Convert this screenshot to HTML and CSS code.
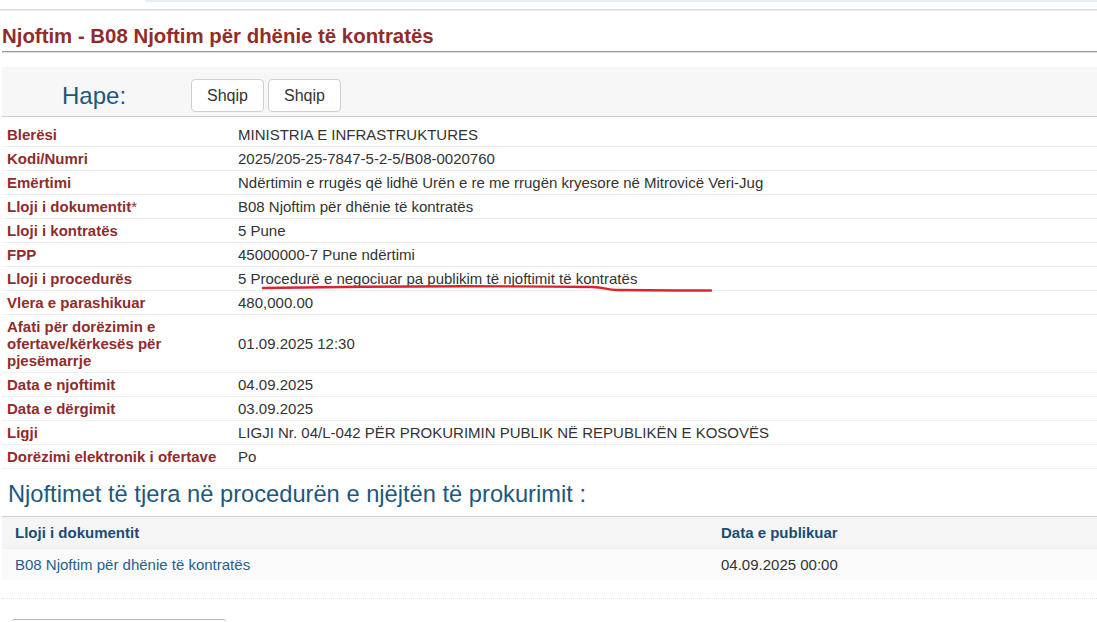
FILE: index.html
```html
<!DOCTYPE html>
<html>

<head>
    <meta charset="UTF-8">
    <title>Njoftim - B08 Njoftim për dhënie të kontratës</title>
    <link rel="stylesheet" href="styles.css">
</head>
<body>
<div class="top-strip"></div>
<div class="top-rule"></div>

<div class="page">
    <h1 class="notice-title">Njoftim - B08 Njoftim për dhënie të kontratës</h1>

    <div class="open-panel">
        <div class="open-label">Hape:</div>
        <button class="lang-btn">Shqip</button>
        <button class="lang-btn">Shqip</button>
    </div>

    <table class="details">
        <tr><td class="label">Blerësi</td><td class="value">MINISTRIA E INFRASTRUKTURES</td></tr>
        <tr><td class="label">Kodi/Numri</td><td class="value">2025/205-25-7847-5-2-5/B08-0020760</td></tr>
        <tr><td class="label">Emërtimi</td><td class="value">Ndërtimin e rrugës që lidhë Urën e re me rrugën kryesore në Mitrovicë Veri-Jug</td></tr>
        <tr><td class="label">Lloji i dokumentit<span class="req">*</span></td><td class="value">B08 Njoftim për dhënie të kontratës</td></tr>
        <tr><td class="label">Lloji i kontratës</td><td class="value">5 Pune</td></tr>
        <tr><td class="label">FPP</td><td class="value">45000000-7 Pune ndërtimi</td></tr>
        <tr><td class="label">Lloji i procedurës</td><td class="value">5 Procedurë e negociuar pa publikim të njoftimit të kontratës</td></tr>
        <tr><td class="label">Vlera e parashikuar</td><td class="value">480,000.00</td></tr>
        <tr><td class="label">Afati për dorëzimin e ofertave/kërkesës për pjesëmarrje</td><td class="value">01.09.2025 12:30</td></tr>
        <tr><td class="label">Data e njoftimit</td><td class="value">04.09.2025</td></tr>
        <tr><td class="label">Data e dërgimit</td><td class="value">03.09.2025</td></tr>
        <tr><td class="label">Ligji</td><td class="value">LIGJI Nr. 04/L-042 PËR PROKURIMIN PUBLIK NË REPUBLIKËN E KOSOVËS</td></tr>
        <tr><td class="label">Dorëzimi elektronik i ofertave</td><td class="value">Po</td></tr>
    </table>

    <h2 class="other-title">Njoftimet të tjera në procedurën e njëjtën të prokurimit :</h2>

    <table class="others">
        <tr class="head"><th class="col-doc">Lloji i dokumentit</th><th>Data e publikuar</th></tr>
        <tr class="row"><td><a href="#">B08 Njoftim për dhënie të kontratës</a></td><td>04.09.2025 00:00</td></tr>
        <tr class="blank"><td></td><td></td></tr>
    </table>

    <div class="bottom-box"></div>
</div>

<!-- red pen mark under the procedure type -->
<svg class="pen-mark" width="460" height="14" viewBox="0 0 460 14">
    <path d="M5 7 C 120 5, 250 5, 335 6 C 345 6, 350 9, 358 9 C 400 9.5, 420 9.5, 453 9.5" fill="none" stroke="#d7262f" stroke-width="2.4" stroke-linecap="round"/>
</svg>
</body>
</html>
```

FILE: styles.css
```css
body {
    margin: 0;
    font-family: "Liberation Sans", Arial, sans-serif;
    color: #333;
    background: #fff;
    position: relative;
}

.top-strip {
    height: 2px;
    margin-left: 145px;
    background: #e8edf2;
    border-bottom-left-radius: 3px;
}
.top-rule {
    margin-top: 7px;
    border-top: 1px solid #d9d9d9;
    border-bottom: 1px solid #ececec;
}

.page {
    padding-left: 2px;
}

.notice-title {
    margin: 13px 0 0;
    padding: 0 0 3px 0;
    font-size: 20.4px;
    line-height: 24px;
    font-weight: bold;
    color: #8f2c2c;
    border-bottom: 1px solid #999;
    box-shadow: 0 1px 0 #dedede;
}

.open-panel {
    display: flex;
    margin-top: 15px;
    padding: 12px 0 4px;
    background: #f7f7f7;
    border-bottom: 1px solid #cdcdcd;
}
.open-label {
    width: 129px;
    padding-left: 60px;
    font-size: 24px;
    line-height: 33px;
    color: #1f5680;
}
.lang-btn {
    height: 33px;
    width: 73px;
    margin-right: 4px;
    padding: 0;
    font-family: "Liberation Sans", Arial, sans-serif;
    font-size: 16px;
    color: #333;
    background: #fff;
    border: 1px solid #cfcfcf;
    border-radius: 4px;
}

.details {
    width: 100%;
    margin-top: 6px;
    border-collapse: collapse;
    font-size: 15px;
    line-height: 17px;
}
.details td {
    padding: 3px 5px;
    border-bottom: 1px solid #f0f0f0;
    vertical-align: middle;
}
.details .label {
    width: 221px;
    font-weight: bold;
    color: #8f2c2c;
}
.details .req {
    font-weight: normal;
}
.details .value {
    color: #333;
}

.other-title {
    margin: 12px 0 0;
    padding: 0 0 9px 6px;
    font-size: 23.7px;
    line-height: 26px;
    font-weight: normal;
    color: #1d5880;
    border-bottom: 1px solid #cfcfcf;
}

.others {
    width: 100%;
    border-collapse: collapse;
    font-size: 15px;
    line-height: 17px;
}
.others th {
    text-align: left;
    font-weight: bold;
    color: #1b4d73;
}
.others th, .others td {
    padding: 7px 13px;
}
.others .col-doc {
    width: 675px;
    padding-right: 18px;
}
.others .head {
    background: #f5f5f5;
    border-bottom: 1px solid #f0f0f0;
}
.others .row {
    background: #fafafa;
}
.others .row td {
    padding: 7px 13px;
    height: 17px;
}
.others a {
    color: #26608c;
    text-decoration: none;
}
.others .blank td {
    height: 18px;
    padding: 0;
    border-bottom: 1px dotted #e6e6e6;
}

.bottom-box {
    width: 214px;
    height: 20px;
    margin: 20px 0 0 10px;
    border-top: 1px solid #b5b5b5;
    border-radius: 3px;
}

.pen-mark {
    position: absolute;
    left: 258px;
    top: 281px;
}
```
